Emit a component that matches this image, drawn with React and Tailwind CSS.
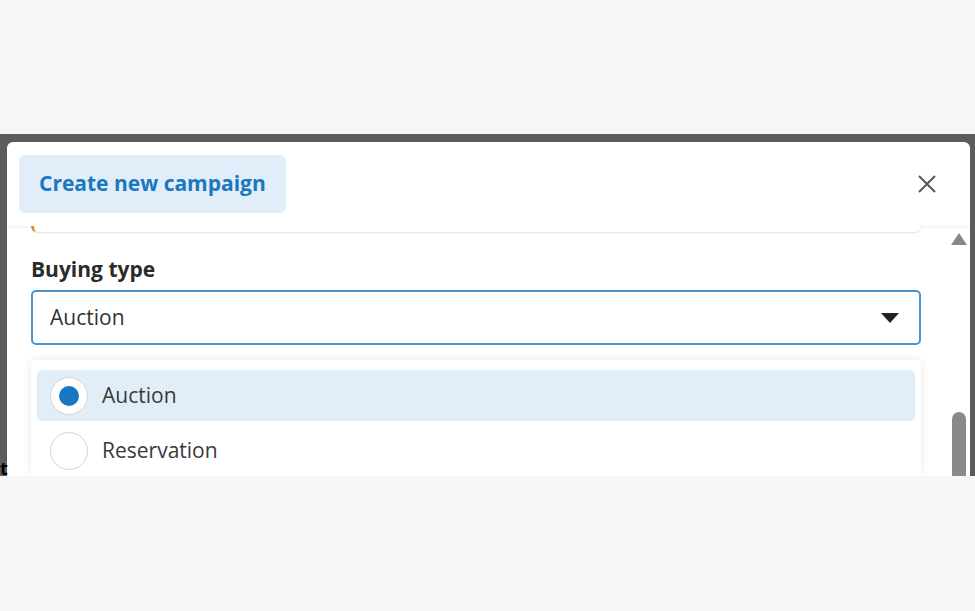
const Radio = ({ checked }) => (
  <span className="flex h-[38px] w-[38px] shrink-0 items-center justify-center rounded-full border border-[#d4d4d4] bg-white">
    {checked && <span className="h-[20px] w-[20px] rounded-full bg-[#1677c4]" />}
  </span>
);

const Option = ({ label, checked }) => (
  <div
    className={`flex h-[51px] items-center gap-[14px] rounded-[5px] pl-[13px] ${
      checked ? 'bg-[#e1edf7]' : 'bg-white'
    }`}
  >
    <Radio checked={checked} />
    <span className="text-[21px] text-[#3a3a3a]">{label}</span>
  </div>
);

export default function App() {
  return (
    <div
      className="flex h-[611px] w-[975px] flex-col overflow-hidden bg-[#f5f6f8]"
      style={{ fontFamily: '"Open Sans", "Noto Sans", sans-serif' }}
    >
      <div className="h-[134px] shrink-0" />

      <div className="relative flex h-[342px] shrink-0 bg-[#5c5c5c] pl-[7px] pr-[5px] pt-[8px]">
        <span className="absolute bottom-[-4px] left-0 text-[18px] font-bold leading-[24px] text-black">t</span>

        <div className="flex flex-1 flex-col overflow-hidden rounded-t-[6px] bg-white">
          {/* header */}
          <div className="flex h-[84px] shrink-0 items-center justify-between pl-[12px] pr-[32px] shadow-[0_1px_2px_rgba(0,0,0,0.08)]">
            <div className="flex h-[58px] items-center rounded-[6px] bg-[#e1edf8] px-[20px] text-[21px] font-bold text-[#1a78bf]">
              Create new campaign
            </div>
            <svg width="22" height="22" viewBox="0 0 22 22" fill="none" stroke="#555" strokeWidth="2">
              <path d="M3 3l16 16M19 3L3 19" />
            </svg>
          </div>

          {/* body */}
          <div className="flex flex-1">
            <div className="ml-[24px] flex w-[890px] flex-col">
              <div className="h-[6px] rounded-b-[6px] border-l-[3px] border-[#e8890c] bg-white shadow-[0_1px_2px_rgba(0,0,0,0.12)]" />

              <div className="mt-[23px] text-[21px] font-bold leading-[28px] text-[#2b2b2b]">Buying type</div>

              <div className="mt-[7px] flex h-[55px] items-center justify-between rounded-[5px] border-[2px] border-[#4d94cf] pl-[17px] pr-[20px]">
                <span className="text-[21px] text-[#333]">Auction</span>
                <svg width="18" height="10" viewBox="0 0 18 10">
                  <path d="M0 0h18L9 10z" fill="#222" />
                </svg>
              </div>

              <div className="mt-[15px] flex flex-1 flex-col gap-[4px] rounded-t-[4px] bg-white px-[6px] pt-[10px] shadow-[0_0_8px_rgba(0,0,0,0.1)]">
                <Option label="Auction" checked />
                <Option label="Reservation" />
              </div>
            </div>

            {/* scrollbar */}
            <div className="ml-auto mr-[4px] flex w-[14px] flex-col items-center">
              <svg className="mt-[7px]" width="16" height="12" viewBox="0 0 16 12">
                <path d="M8 0l8 12H0z" fill="#888" />
              </svg>
              <div className="mt-[167px] w-[14px] flex-1 rounded-t-[7px] bg-[#8a8a8a]" />
            </div>
          </div>
        </div>
      </div>
    </div>
  );
}
